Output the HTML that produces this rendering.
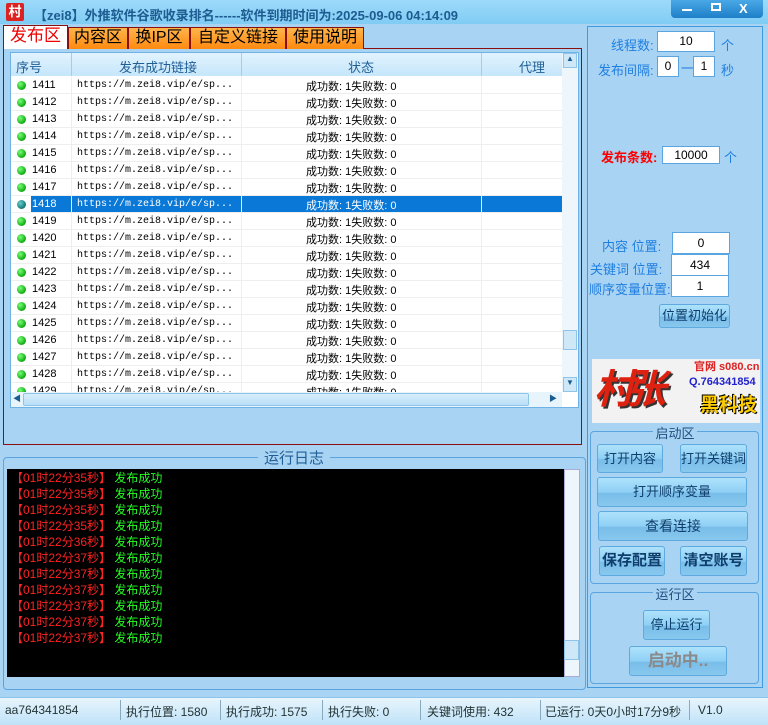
<!DOCTYPE html>
<html><head><meta charset="utf-8"><style>
*{margin:0;padding:0;box-sizing:border-box}
body{width:768px;height:725px;overflow:hidden;background:#a9d3f3;font-family:"Liberation Sans","Noto Sans CJK SC",sans-serif;font-size:12px;position:relative}
.a{position:absolute;white-space:nowrap}
.title{left:0;top:0;width:768px;height:24px;background:linear-gradient(#9ddafa,#80ccf4);}
.tab{top:27px;height:22px;border:1px solid #8a1010;border-bottom:none;background:linear-gradient(#ffb44a,#ff8a10);font-size:16px;text-align:center;line-height:20px;color:#000}
.btn{border:1px solid #5ea9de;border-radius:3px;background:linear-gradient(#aee2fb 0%,#8fd0f5 50%,#79bde9 55%,#88c8ee 100%);color:#0f3e6c;text-align:center;font-size:13px}
.inp{background:#fff;border:1px solid #5aa5e0;text-align:center;font-size:12px;color:#000}
.lbl{color:#1f7fe0;font-size:13px}
.row{position:absolute;left:11px;width:551px;height:17px;border-bottom:1px solid #eee;font-size:11px;color:#000;background:#fff;white-space:nowrap}
.row span{position:absolute;top:2px;white-space:nowrap}
.dot{position:absolute;left:6px;top:4px;width:9px;height:9px;border-radius:50%;background:radial-gradient(circle at 35% 35%,#7f7,#1a1 70%)}
.log{position:absolute;left:11px;font-size:12px;line-height:16px;white-space:nowrap}
.sb{position:absolute;top:703px;height:16px;font-size:12px;color:#233;white-space:nowrap}
</style></head><body>
<div class="a title"></div>
<div class="a" style="left:6px;top:3px;width:18px;height:18px;background:#d22;border-radius:2px;color:#fff;font-weight:bold;font-size:13px;text-align:center;line-height:18px">村</div>
<div class="a" style="left:34px;top:5px;font-size:13px;font-weight:bold;color:#1d5b90">【zei8】外推软件谷歌收录排名------软件到期时间为:2025-09-06 04:14:09</div>
<div class="a" style="left:671px;top:0;width:92px;height:18px;background:linear-gradient(#4aa8e6,#1e7fc8);border-radius:0 0 4px 4px"></div>
<div class="a" style="left:682px;top:9px;width:10px;height:2px;background:#fff"></div>
<div class="a" style="left:711px;top:3px;width:10px;height:8px;border:2px solid #fff"></div>
<div class="a" style="left:739px;top:1px;color:#fff;font-weight:bold;font-size:13px">X</div>

<div class="a" style="left:3px;top:48px;width:579px;height:397px;border:1px solid #8a1010;background:#a9d3f3"></div>
<div class="a tab" style="left:3px;width:65px;top:25px;height:24px;background:#fff;color:#e00;font-size:17px">发布区</div>
<div class="a tab" style="left:68px;width:60px">内容区</div>
<div class="a tab" style="left:128px;width:62px">换IP区</div>
<div class="a tab" style="left:190px;width:96px">自定义链接</div>
<div class="a tab" style="left:286px;width:78px">使用说明</div>

<div class="a" style="left:10px;top:52px;width:569px;height:356px;border:1px solid #6fb3e6;background:#fff"></div>
<div class="a" style="left:11px;top:53px;width:551px;height:23px;background:linear-gradient(#e2f3fe,#c5e6fb);color:#1f5f96;font-size:13px">
<span class="a" style="left:5px;top:4px">序号</span>
<span class="a" style="left:60px;top:0;width:1px;height:23px;background:#9dd0f0"></span>
<span class="a" style="left:108px;top:4px">发布成功链接</span>
<span class="a" style="left:230px;top:0;width:1px;height:23px;background:#9dd0f0"></span>
<span class="a" style="left:337px;top:4px">状态</span>
<span class="a" style="left:470px;top:0;width:1px;height:23px;background:#9dd0f0"></span>
<span class="a" style="left:508px;top:4px">代理</span>
</div>
<div id="rows"></div>
<div class="a" style="left:562px;top:53px;width:16px;height:339px;background:#eef6fb"></div>
<div class="a" style="left:563px;top:53px;width:14px;height:15px;background:#cfe8f8;border:1px solid #8cc4ea;font-size:8px;text-align:center;color:#1a5b90">▲</div>
<div class="a" style="left:563px;top:330px;width:14px;height:20px;background:#cfe8f8;border:1px solid #8cc4ea"></div>
<div class="a" style="left:563px;top:377px;width:14px;height:15px;background:#cfe8f8;border:1px solid #8cc4ea;font-size:8px;text-align:center;color:#1a5b90">▼</div>
<div class="a" style="left:11px;top:392px;width:551px;height:15px;background:#e8f4fb"></div>
<div class="a" style="left:23px;top:393px;width:506px;height:13px;background:linear-gradient(#d8eefb,#b7def7);border:1px solid #8cc4ea;border-radius:2px"></div>
<div class="a" style="left:13px;top:393px;font-size:8px;color:#1a5b90">◀</div>
<div class="a" style="left:549px;top:393px;font-size:8px;color:#1a5b90">▶</div>

<div class="a" style="left:3px;top:457px;width:583px;height:233px;border:1px solid #5aa5e0;border-radius:4px"></div>
<div class="a" style="left:258px;top:447px;width:72px;background:#a9d3f3;text-align:center;font-size:15px;color:#1f5f96">运行日志</div>
<div class="a" style="left:7px;top:469px;width:557px;height:208px;background:#000"></div>
<div class="a" style="left:564px;top:469px;width:16px;height:208px;background:#eef6fb;border:1px solid #aad"></div>
<div class="a" style="left:564px;top:640px;width:15px;height:20px;background:#cfe8f8;border:1px solid #8cc4ea"></div>
<div id="logs"></div>

<div class="a" style="left:587px;top:26px;width:176px;height:662px;border:1px solid #3f9ae0"></div>
<div class="a lbl" style="left:611px;top:35px">线程数:</div>
<div class="a inp" style="left:657px;top:31px;width:58px;height:21px;line-height:19px">10</div>
<div class="a lbl" style="left:721px;top:35px">个</div>
<div class="a lbl" style="left:598px;top:60px">发布间隔:</div>
<div class="a inp" style="left:657px;top:56px;width:22px;height:21px;line-height:19px">0</div>
<div class="a lbl" style="left:681px;top:58px">一</div>
<div class="a inp" style="left:693px;top:56px;width:22px;height:21px;line-height:19px">1</div>
<div class="a lbl" style="left:721px;top:60px">秒</div>
<div class="a" style="left:601px;top:147px;color:#f00;font-weight:bold;font-size:13px">发布条数:</div>
<div class="a inp" style="left:662px;top:146px;width:58px;height:18px;line-height:16px">10000</div>
<div class="a lbl" style="left:724px;top:147px">个</div>
<div class="a lbl" style="left:602px;top:236px">内容 位置:</div>
<div class="a inp" style="left:672px;top:232px;width:58px;height:22px;line-height:20px">0</div>
<div class="a lbl" style="left:590px;top:259px">关键词 位置:</div>
<div class="a inp" style="left:671px;top:254px;width:58px;height:22px;line-height:20px">434</div>
<div class="a lbl" style="left:589px;top:279px">顺序变量位置:</div>
<div class="a inp" style="left:671px;top:275px;width:58px;height:22px;line-height:20px">1</div>
<div class="a btn" style="left:659px;top:304px;width:71px;height:24px;line-height:22px">位置初始化</div>
<div class="a" style="left:592px;top:359px;width:168px;height:64px;background:#f2f2f2;overflow:hidden">
<div class="a" style="left:2px;top:6px;font-size:40px;line-height:50px;font-weight:bold;color:#d21;font-style:italic;letter-spacing:-8px;text-shadow:2px 2px #333">村张</div>
<div class="a" style="left:102px;top:1px;font-size:11px;line-height:14px;font-weight:bold;color:#d22">官网 s080.cn</div>
<div class="a" style="left:97px;top:16px;font-size:11px;line-height:14px;font-weight:bold;color:#22c">Q.764341854</div>
<div class="a" style="left:108px;top:34px;font-size:19px;line-height:26px;font-weight:bold;color:#fc0;text-shadow:1px 1px #000,-1px -1px #000">黑科技</div>
</div>
<div class="a" style="left:590px;top:431px;width:169px;height:153px;border:1px solid #5aa5e0;border-radius:4px"></div>
<div class="a" style="left:653px;top:423px;width:44px;background:#a9d3f3;text-align:center;font-size:13px;color:#1f4f80">启动区</div>
<div class="a btn" style="left:597px;top:444px;width:66px;height:29px;line-height:27px">打开内容</div>
<div class="a btn" style="left:680px;top:444px;width:67px;height:29px;line-height:27px">打开关键词</div>
<div class="a btn" style="left:597px;top:477px;width:150px;height:30px;line-height:28px">打开顺序变量</div>
<div class="a btn" style="left:598px;top:511px;width:150px;height:30px;line-height:28px;font-size:14px">查看连接</div>
<div class="a btn" style="left:599px;top:546px;width:66px;height:30px;line-height:28px;font-size:15px;font-weight:bold">保存配置</div>
<div class="a btn" style="left:680px;top:546px;width:67px;height:30px;line-height:28px;font-size:15px;font-weight:bold">清空账号</div>
<div class="a" style="left:590px;top:592px;width:169px;height:92px;border:1px solid #5aa5e0;border-radius:4px"></div>
<div class="a" style="left:653px;top:584px;width:44px;background:#a9d3f3;text-align:center;font-size:13px;color:#1f4f80">运行区</div>
<div class="a btn" style="left:643px;top:610px;width:67px;height:30px;line-height:28px">停止运行</div>
<div class="a btn" style="left:629px;top:646px;width:98px;height:30px;line-height:28px;font-size:17px;font-weight:bold;color:#8a8a8a">启动中..</div>

<div class="a" style="left:0;top:697px;width:768px;height:28px;background:linear-gradient(#e8f5fd,#bfe2f8);border-top:1px solid #8cc4ea"></div>
<div class="sb" style="left:5px">aa764341854</div>
<div class="sb" style="left:126px">执行位置: 1580</div>
<div class="sb" style="left:226px">执行成功: 1575</div>
<div class="sb" style="left:328px">执行失败: 0</div>
<div class="sb" style="left:427px">关键词使用: 432</div>
<div class="sb" style="left:545px">已运行: 0天0小时17分9秒</div>
<div class="sb" style="left:698px">V1.0</div>
<div class="a" style="left:120px;top:700px;width:1px;height:20px;background:#8ab"></div>
<div class="a" style="left:220px;top:700px;width:1px;height:20px;background:#8ab"></div>
<div class="a" style="left:322px;top:700px;width:1px;height:20px;background:#8ab"></div>
<div class="a" style="left:420px;top:700px;width:1px;height:20px;background:#8ab"></div>
<div class="a" style="left:540px;top:700px;width:1px;height:20px;background:#8ab"></div>
<div class="a" style="left:689px;top:700px;width:1px;height:20px;background:#8ab"></div>

<script>
var h='';for(var i=0;i<19;i++){var y=77+i*17,sel=i==7;var hh=(i==18)?15:17;var c=sel?'color:#fff;':'';
h+='<div class="row" style="top:'+y+'px;height:'+hh+'px;overflow:hidden">'+(sel?'<div style="position:absolute;left:20px;top:0;width:531px;height:17px;background:#0a78d7"></div>':'')+'<div class="dot"'+(sel?' style="background:radial-gradient(circle at 35% 35%,#6cc,#177 70%)"':'')+'></div><span style="left:21px;'+c+'">'+(1411+i)+'</span><span style="left:66px;font-family:\'Liberation Mono\',monospace;font-size:10px;top:3px;'+c+'">https://m.zei8.vip/e/sp...</span><span style="left:295px;top:1px;'+c+'">成功数: 1失败数: 0</span><span style="left:60px;top:0;width:1px;height:17px;background:#eee"></span><span style="left:230px;top:0;width:1px;height:17px;background:#eee"></span><span style="left:470px;top:0;width:1px;height:17px;background:#eee"></span></div>';}
document.getElementById('rows').innerHTML=h;
var t=['35','35','35','35','36','37','37','37','37','37','37'],l='';
for(var j=0;j<11;j++)l+='<div class="log" style="top:'+(470+j*16)+'px"><span style="color:#f22">【01时22分'+t[j]+'秒】</span> <span style="color:#2f2">发布成功</span></div>';
document.getElementById('logs').innerHTML=l;
</script>
</body></html>
